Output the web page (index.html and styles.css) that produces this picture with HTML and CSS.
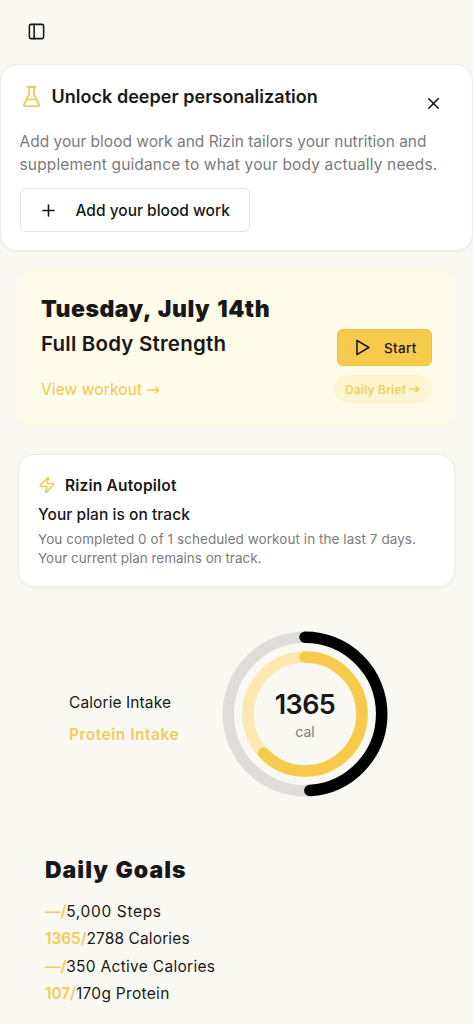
FILE: index.html
```html
<!DOCTYPE html>
<html lang="en">
<head>
<meta charset="utf-8">
<title>Rizin</title>
<link rel="stylesheet" href="styles.css">
</head>
<body>
<header class="topbar">
  <svg class="icon" width="19" height="19" viewBox="0 0 24 24"><rect x="3" y="3" width="18" height="18" rx="2"/><path d="M9 3v18"/></svg>
</header>
<section class="unlock">
  <div class="unlock-head">
    <svg class="icon gold" width="23" height="23" viewBox="0 0 24 24"><path d="M9.500 2v7.500L4.300 20a1.400 1.400 0 0 0 1.300 2h12.800a1.400 1.400 0 0 0 1.300-2L14.500 9.500V2"/><path d="M7 15h10"/><path d="M8 2h8"/></svg>
    <h2 class="unlock-title">Unlock deeper personalization</h2>
    <svg class="icon close" width="19" height="19" viewBox="0 0 24 24"><path d="M18 6 6 18"/><path d="m6 6 12 12"/></svg>
  </div>
  <p class="unlock-text"><span class="ul-1">Add your blood work and Rizin tailors your nutrition and</span><br><span class="ul-2">supplement guidance to what your body actually needs.</span></p>
  <button class="add"><svg class="icon" width="19" height="19" viewBox="0 0 24 24"><path d="M5 12h14"/><path d="M12 5v14"/></svg><span>Add your blood work</span></button>
</section>
<section class="today">
  <div class="today-info">
    <h1 class="date">Tuesday, July 14th</h1>
    <h2 class="workout">Full Body Strength</h2>
    <a class="view"><span>View workout</span><svg class="arrow" width="13" height="10" viewBox="0 0 13 10"><path d="M.5 5h11M8.8 2.200 11.8 5 8.800 7.800"/></svg></a>
  </div>
  <div class="today-actions">
    <button class="start"><svg class="icon" width="19" height="19" viewBox="0 0 24 24"><path d="M5 3 20 12 5 21Z"/></svg><span>Start</span></button>
    <a class="brief"><span>Daily Brief</span><svg class="arrow bold" width="11" height="8" viewBox="0 0 11 8"><path d="M.5 4h9M7 1.600 9.800 4 7 6.400"/></svg></a>
  </div>
</section>
<section class="autopilot">
  <div class="auto-head">
    <svg class="icon gold" width="18" height="18" viewBox="0 0 24 24"><path d="M4 14a1 1 0 0 1-.78-1.63l9.9-10.2a.5.5 0 0 1 .86.46l-1.92 6.02A1 1 0 0 0 13 10h7a1 1 0 0 1 .78 1.63l-9.900 10.200a.5.5 0 0 1-.86-.46l1.920-6.020A1 1 0 0 0 11 14z"/></svg>
    <h3 class="auto-title">Rizin Autopilot</h3>
  </div>
  <p class="status">Your plan is on track</p>
  <p class="detail"><span class="d-1">You completed 0 of 1 scheduled workout in the last 7 days.</span><br><span class="d-2">Your current plan remains on track.</span></p>
</section>
<section class="intake">
  <div class="legend">
    <p class="calorie">Calorie Intake</p>
    <p class="protein">Protein Intake</p>
  </div>
  <div class="rings">
    <svg width="166" height="166" viewBox="-83 -83 166 166">
      <g class="ring" transform="rotate(-90)">
        <circle class="track-cal" r="76.7"/>
        <circle class="fill-cal" r="76.7" pathLength="100" stroke-dasharray="48.96 100"/>
        <circle class="track-pro" r="57"/>
        <circle class="fill-pro" r="57" pathLength="100" stroke-dasharray="62.94 100"/>
      </g>
    </svg>
    <div class="total"><span class="number">1365</span><span class="unit">cal</span></div>
  </div>
</section>
<section class="goals">
  <h2 class="goals-title">Daily Goals</h2>
  <p class="g-1"><b>—/</b>5,000 Steps</p>
  <p class="g-2"><b>1365/</b>2788 Calories</p>
  <p class="g-3"><b>—/</b>350 Active Calories</p>
  <p class="g-4"><b>107/</b>170g Protein</p>
</section>
</body>
</html>
```
FILE: styles.css
```css
* { box-sizing: border-box; margin: 0; padding: 0; }
body { background: #f9f8f3; color: #181818; font-family: Inter, "Liberation Sans", sans-serif; font-size: 15.5px; height: 1024px; overflow: hidden; white-space: nowrap; }
button { font: inherit; color: inherit; }
.icon { flex: none; display: block; fill: none; stroke: currentColor; stroke-width: 2; stroke-linecap: round; stroke-linejoin: round; }
.gold { color: #efcd55; }
.arrow { flex: none; fill: none; stroke: currentColor; stroke-width: 1.3; stroke-linecap: round; stroke-linejoin: round; }
.bold { stroke-width: 1.6; }

.topbar { height: 64px; padding: 22px 27px; }

.unlock { height: 187px; padding: 20px 19px 0 18.5px; background: #fff; border: 1px solid #ecebe7; border-radius: 17px; box-shadow: 0 1px 3px #0000000d; }
.unlock-head { display: flex; height: 45px; }
.unlock-title { margin-left: 9px; font-size: 18px; font-weight: 600; line-height: 24px; letter-spacing: .03px; }
.close { margin: 9px 10px 0 auto; }
.unlock-text { color: #7b7b7b; line-height: 23px; }
.ul-2 { letter-spacing: .15px; }
.add { display: flex; align-items: center; gap: 18px; width: 230px; height: 44px; margin-top: 12px; padding-left: 18px; background: #fff; border: 1px solid #e5e5e3; border-radius: 6px; font-weight: 500; }

.today { display: flex; justify-content: space-between; height: 159px; margin: 18px 18px 0; padding: 23px 23px 0; background: #fefbe9; border-radius: 17px; }
.date { font-size: 23px; font-weight: 900; line-height: 34px; letter-spacing: .5px; word-spacing: 2px; }
.workout { font-size: 20.5px; font-weight: 600; line-height: 35px; letter-spacing: .2px; }
.view { display: flex; align-items: center; gap: 5px; margin-top: 17px; line-height: 24px; letter-spacing: .12px; color: #efc94f; }
.today-actions { display: flex; flex-direction: column; align-items: flex-end; padding-top: 37px; }
.start { display: flex; align-items: center; gap: 12px; width: 95px; height: 37px; padding-left: 15px; background: #f6ca4b; border: 1px solid #edc243; border-radius: 6px; font-size: 13.5px; font-weight: 500; letter-spacing: .3px; }
.brief { display: flex; align-items: center; gap: 3px; width: 98px; height: 28px; margin-top: 9px; padding-left: 11px; border-radius: 14px; background: #fdf4d1; color: #f0d165; font-size: 12px; font-weight: 600; letter-spacing: .15px; }

.autopilot { height: 133px; margin: 26px 18px 0; padding: 18px 19px 0; background: #fff; border: 1px solid #eeede9; border-radius: 16px; box-shadow: 0 1px 3px #0000000d; }
.auto-head { display: flex; align-items: center; gap: 9px; height: 24px; }
.auto-title { font-size: 15.5px; font-weight: 600; letter-spacing: .2px; }
.status { margin-top: 6px; font-weight: 500; line-height: 24px; letter-spacing: .05px; }
.detail { margin-top: 3px; color: #7b7b7b; font-size: 13.5px; line-height: 18.5px; }
.d-1 { letter-spacing: .06px; }
.d-2 { letter-spacing: -.02px; }

.intake { display: flex; align-items: center; height: 166px; margin-top: 44px; padding-left: 69px; }
.legend { width: 153px; padding-top: 9px; line-height: 32px; }
.calorie { letter-spacing: .1px; }
.protein { color: #f0cd5c; font-weight: 600; letter-spacing: .5px; }
.rings { display: grid; width: 166px; height: 166px; }
.rings > * { grid-area: 1 / 1; }
.ring { fill: none; stroke-width: 11.5; stroke-linecap: round; }
.track-cal { stroke: #deddda; }
.fill-cal { stroke: #000; }
.track-pro { stroke: #fde8b1; }
.fill-pro { stroke: #f6ca4b; }
.total { display: flex; flex-direction: column; align-items: center; padding-top: 57px; }
.number { font-size: 27px; font-weight: 600; line-height: 33px; letter-spacing: -.6px; }
.unit { color: #7b7b7b; font-size: 14px; line-height: 21px; }

.goals { padding: 57px 0 0 45px; line-height: 27.4px; }
.goals-title { margin-bottom: 11px; font-size: 23px; font-weight: 900; line-height: 33px; letter-spacing: 1px; word-spacing: 1px; }
.goals b { color: #f2cd58; font-weight: 600; letter-spacing: -.1px; }
.g-1 { letter-spacing: .65px; }
.g-2 { letter-spacing: .12px; }
.g-3 { letter-spacing: .3px; }
.g-4 { letter-spacing: .3px; }
```
